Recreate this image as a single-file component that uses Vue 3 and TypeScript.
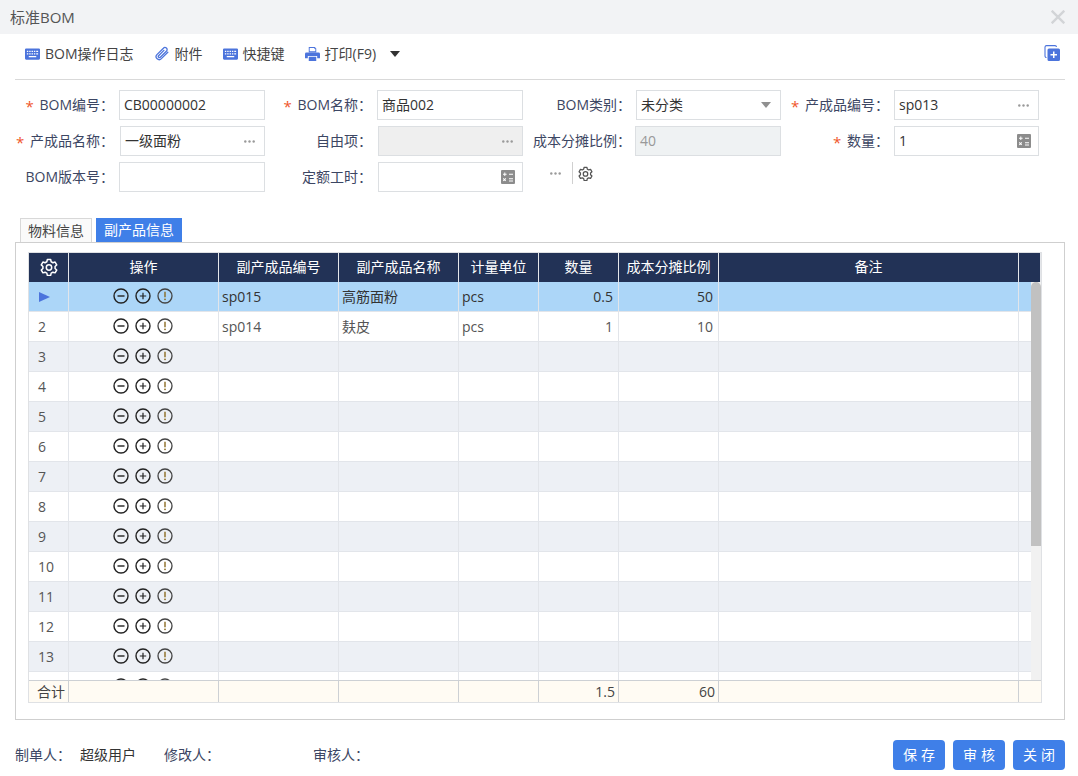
<script setup lang="ts">
interface Row {
  no: number
  code: string
  name: string
  unit: string
  qty: string
  ratio: string
}

const filled: Record<number, Partial<Row>> = {
  1: { code: 'sp015', name: '高筋面粉', unit: 'pcs', qty: '0.5', ratio: '50' },
  2: { code: 'sp014', name: '麸皮', unit: 'pcs', qty: '1', ratio: '10' }
}

const rows: Row[] = Array.from({ length: 14 }, (_, i) => ({
  no: i + 1,
  code: '',
  name: '',
  unit: '',
  qty: '',
  ratio: '',
  ...filled[i + 1]
}))

const heads = ['操作', '副产成品编号', '副产成品名称', '计量单位', '数量', '成本分摊比例', '备注', '']
</script>

<template>
  <div class="dialog">
    <svg class="defs" width="0" height="0" aria-hidden="true">
      <symbol id="i-keyboard" viewBox="0 0 16 12">
        <path fill-rule="evenodd" d="M1.2 0h13.6A1.2 1.2 0 0 1 16 1.2v9.6a1.2 1.2 0 0 1-1.2 1.2H1.2A1.2 1.2 0 0 1 0 10.800V1.200A1.200 1.200 0 0 1 1.200 0zM2 2.500v1.300h1.500V2.500zm2.500 0v1.300H6V2.500zm2.500 0v1.300h1.500V2.500zm2.500 0v1.300H11V2.500zm2.500 0v1.300h2V2.500zM2 5.200v1.300h1.500V5.200zm2.500 0v1.300H6V5.200zm2.500 0v1.300h1.500V5.200zm2.500 0v1.300H11V5.200zm2.500 0v1.300h2V5.200zM4 8v1.500h8V8z" />
      </symbol>
      <symbol id="i-clip" viewBox="0 0 16 16">
        <path fill="none" stroke="currentColor" stroke-width="1.300" stroke-linecap="round" stroke-linejoin="round" d="M13.800 6.200 7.400 12.600a3 3 0 0 1-4.500-4l6.500-6.400a2.100 2.100 0 0 1 3.200 2.800L6.300 11.200a1.100 1.100 0 0 1-1.700-1.500l5.300-5.300" />
      </symbol>
      <symbol id="i-printer" viewBox="0 0 16 16">
        <path d="M4 .5h6.500L12 2v4H4zM5 1.500v3.500h6V2.500h-1.200v-1zM1.500 6.500h13A1.500 1.500 0 0 1 16 8v4.500h-3V10H3v2.500H0V8a1.500 1.500 0 0 1 1.500-1.500zM4 11h8v4.500H4z" />
      </symbol>
      <symbol id="i-copy-add" viewBox="0 0 16 16">
        <path fill="none" stroke="currentColor" stroke-width="1.100" d="M2.500 12.500A1.500 1.500 0 0 1 1 11V2A1.500 1.500 0 0 1 2.500.6H11A1.500 1.500 0 0 1 12.500 2" />
        <path fill-rule="evenodd" d="M5 3.500h9.500A1.500 1.500 0 0 1 16 5v9.500a1.500 1.500 0 0 1-1.500 1.500H5a1.500 1.500 0 0 1-1.500-1.500V5A1.500 1.500 0 0 1 5 3.500zm4 3v2.500H6.500v1.500H9V13h1.500v-2.500H13V9h-2.500V6.500z" />
      </symbol>
      <symbol id="i-calc" viewBox="0 0 14 14">
        <path fill-rule="evenodd" d="M1 0h12a1 1 0 0 1 1 1v12a1 1 0 0 1-1 1H1a1 1 0 0 1-1-1V1a1 1 0 0 1 1-1zm2.300 2.500v1.200H2v1h1.300V6h1V4.700h1.300v-1H4.300V2.500zM8 3.700v1h4v-1zM2.600 8.100l-.7.700.9.900-.9.900.7.700.9-.9.900.9.700-.7-.9-.9.900-.9-.7-.7-.9.900zM8 8.200v1h4v-1zm0 2.200v1h4v-1z" />
      </symbol>
      <symbol id="i-dots" viewBox="0 0 11 3">
        <circle cx="1.300" cy="1.500" r="1.200" />
        <circle cx="5.500" cy="1.500" r="1.200" />
        <circle cx="9.700" cy="1.500" r="1.200" />
      </symbol>
      <symbol id="i-gear" viewBox="0 0 24 24">
        <path fill="none" stroke="currentColor" stroke-linejoin="round" stroke-width="2" d="M9.800 2h4.400l.7 3 2.300 1.300 2.900-.9 2.200 3.800-2.200 2.100v2.600l2.200 2.100-2.200 3.800-2.900-.9-2.300 1.300-.7 3H9.800l-.7-3-2.300-1.300-2.900.9L1.700 16l2.200-2.100v-2.600L1.700 9.200l2.200-3.800 2.900.9L9.100 5z" />
        <circle cx="12" cy="12.600" r="3.600" fill="none" stroke="currentColor" stroke-width="2" />
      </symbol>
      <symbol id="i-minus" viewBox="0 0 16 16">
        <circle cx="8" cy="8" r="7" fill="none" stroke="currentColor" stroke-width="1.400" />
        <path d="M4.500 8h7" stroke="currentColor" stroke-width="1.400" />
      </symbol>
      <symbol id="i-plus" viewBox="0 0 16 16">
        <circle cx="8" cy="8" r="7" fill="none" stroke="currentColor" stroke-width="1.400" />
        <path d="M4.800 8h6.400M8 4.800v6.400" stroke="currentColor" stroke-width="1.200" />
      </symbol>
      <symbol id="i-warn" viewBox="0 0 16 16">
        <circle cx="8" cy="8" r="7" fill="none" stroke="currentColor" stroke-width="1.300" />
        <path d="M8 3.800v5.400" stroke="#8a6a20" stroke-width="1.400" />
        <circle cx="8" cy="11.300" r=".9" fill="#8a6a20" />
      </symbol>
    </svg>

    <header class="title-bar">
      <span class="title">标准BOM</span>
      <svg class="close" viewBox="0 0 14 14" width="14" height="14">
        <path d="M.7.7l12.600 12.600M13.300.7.700 13.300" stroke="#d2d4d7" stroke-width="2.400" fill="none" />
      </svg>
    </header>

    <div class="toolbar">
      <a class="tool"><svg class="ico-kb"><use href="#i-keyboard" /></svg>BOM操作日志</a>
      <a class="tool"><svg class="ico-clip"><use href="#i-clip" /></svg>附件</a>
      <a class="tool"><svg class="ico-kb"><use href="#i-keyboard" /></svg>快捷键</a>
      <a class="tool"><svg class="ico-print"><use href="#i-printer" /></svg>打印(F9)</a>
      <span class="caret"></span>
      <svg class="ico-copy"><use href="#i-copy-add" /></svg>
    </div>

    <section class="form">
      <label class="req">BOM编号：</label>
      <div class="field">CB00000002</div>
      <label class="req">BOM名称：</label>
      <div class="field">商品002</div>
      <label>BOM类别：</label>
      <div class="field">未分类<span class="select-arrow"></span></div>
      <label class="req">产成品编号：</label>
      <div class="field">sp013<svg class="ico-dots"><use href="#i-dots" /></svg></div>

      <label class="req">产成品名称：</label>
      <div class="field inset">一级面粉<svg class="ico-dots"><use href="#i-dots" /></svg></div>
      <label>自由项：</label>
      <div class="field disabled inset"><svg class="ico-dots"><use href="#i-dots" /></svg></div>
      <label>成本分摊比例：</label>
      <div class="field disabled alt outset">40</div>
      <label class="req">数量：</label>
      <div class="field">1<svg class="ico-calc"><use href="#i-calc" /></svg></div>

      <label>BOM版本号：</label>
      <div class="field"></div>
      <label>定额工时：</label>
      <div class="field inset"><svg class="ico-calc"><use href="#i-calc" /></svg></div>
      <div class="form-extra">
        <svg class="ico-dots static"><use href="#i-dots" /></svg>
        <span class="divider"></span>
        <svg class="ico-gear-small"><use href="#i-gear" /></svg>
      </div>
    </section>

    <nav class="tabs">
      <span class="tab">物料信息</span>
      <span class="tab active">副产品信息</span>
    </nav>

    <section class="panel">
      <div class="grid">
        <div class="row head">
          <div class="cell center"><svg class="ico-gear-head"><use href="#i-gear" /></svg></div>
          <div v-for="(h, i) in heads" :key="i" class="cell center">{{ h }}</div>
        </div>

        <div class="body">
          <div
            v-for="row in rows"
            :key="row.no"
            class="row"
            :class="{ current: row.no === 1, stripe: row.no > 1 && row.no % 2 === 1 }"
          >
            <div class="cell no">
              <span v-if="row.no === 1" class="pointer"></span>
              <template v-else-if="row.no < 14">{{ row.no }}</template>
            </div>
            <div class="cell ops">
              <svg><use href="#i-minus" /></svg>
              <svg><use href="#i-plus" /></svg>
              <svg class="warn"><use href="#i-warn" /></svg>
            </div>
            <div class="cell">{{ row.code }}</div>
            <div class="cell">{{ row.name }}</div>
            <div class="cell">{{ row.unit }}</div>
            <div class="cell right">{{ row.qty }}</div>
            <div class="cell right">{{ row.ratio }}</div>
            <div class="cell"></div>
            <div class="cell blank"></div>
          </div>
          <div class="scrollbar"><div class="thumb"></div></div>
        </div>

        <div class="row foot">
          <div class="cell no">合计</div>
          <div class="cell"></div>
          <div class="cell"></div>
          <div class="cell"></div>
          <div class="cell"></div>
          <div class="cell right tight">1.5</div>
          <div class="cell right tight">60</div>
          <div class="cell"></div>
          <div class="cell"></div>
        </div>
      </div>
    </section>

    <footer class="footer">
      <span class="who w1">制单人：</span>
      <span class="who-val">超级用户</span>
      <span class="who w2">修改人：</span>
      <span class="who">审核人：</span>
      <div class="actions">
        <button>保存</button>
        <button>审核</button>
        <button>关闭</button>
      </div>
    </footer>
  </div>
</template>

<style>
html,
body {
  margin: 0;
  background: #fff;
}
</style>

<style scoped>
.dialog {
  width: 1078px;
  height: 776px;
  overflow: hidden;
  display: flex;
  flex-direction: column;
  background: #fff;
  color: #333;
  font: 14px/20px 'Open Sans', 'Noto Sans CJK SC', sans-serif;
}

.defs {
  position: absolute;
}

.title-bar {
  height: 34px;
  flex: none;
  display: flex;
  align-items: center;
  justify-content: space-between;
  padding: 0 13px 0 10px;
  background: #f2f3f5;
  color: #555;
  font-size: 15px;
}

.toolbar {
  height: 46px;
  flex: none;
  box-sizing: border-box;
  margin: 0 13px 0 15px;
  padding: 0 0 6px 10px;
  display: flex;
  align-items: center;
  border-bottom: 1px solid #d9d9d9;
  color: #444;
}

.tool {
  display: flex;
  align-items: center;
  margin-right: 20px;
}

.tool svg {
  color: #4c74dc;
  fill: #4c74dc;
  margin-right: 5px;
}

.ico-kb {
  width: 15px;
  height: 12px;
}

.ico-clip {
  width: 16px;
  height: 16px;
}

.ico-print {
  width: 15px;
  height: 16px;
}

.caret {
  margin-left: -6px;
  border: 5px solid transparent;
  border-top: 6px solid #333;
  border-bottom: 0;
  width: 0;
  height: 0;
}

.ico-copy {
  width: 16px;
  height: 16px;
  margin-left: auto;
  margin-right: 5px;
  color: #4c74dc;
  fill: #4c74dc;
  transform: translateY(-1px);
}

.form {
  flex: none;
  margin: 10px 0 0 15px;
  display: grid;
  grid-template-columns: 104px 146px 112px 146px 113px 145px 113px 145px;
  grid-auto-rows: 30px;
  row-gap: 6px;
}

.form label {
  align-self: center;
  justify-self: end;
  margin-right: 5px;
  color: #3c4663;
  white-space: nowrap;
  position: relative;
}

.form label.req::before {
  content: '*';
  position: absolute;
  left: -14px;
  top: 1px;
  color: #f0562b;
  font-size: 15px;
}

.field {
  display: flex;
  align-items: center;
  box-sizing: border-box;
  height: 30px;
  padding: 0 4px;
  border: 1px solid #dcdfe2;
  background: #fff;
  color: #333;
  font-size: 14px;
}

.field.inset {
  margin-left: 1px;
}

.field.outset {
  margin-left: -1px;
}

.field.disabled {
  background: #efefef;
}

.field.alt {
  background: #eff2f3;
  color: #999;
}

.ico-dots {
  flex: none;
  margin-left: auto;
  margin-right: 5px;
  width: 11px;
  height: 3px;
  fill: #9a9a9a;
}

.ico-dots.static {
  margin: 0;
}

.select-arrow {
  margin-left: auto;
  margin-right: 5px;
  border: 5px solid transparent;
  border-top: 6px solid #909090;
  border-bottom: 0;
}

.ico-calc {
  flex: none;
  margin-left: auto;
  margin-right: 3px;
  width: 14px;
  height: 14px;
  fill: #8c8c8c;
}

.form-extra {
  grid-column: span 2;
  display: flex;
  align-items: center;
  height: 22px;
  padding-left: 27px;
}

.divider {
  width: 1px;
  height: 22px;
  margin: 0 5px 0 11px;
  background: #d0d0d0;
}

.ico-gear-small {
  width: 15px;
  height: 15px;
  color: #555;
}

.tabs {
  flex: none;
  display: flex;
  gap: 4px;
  height: 24px;
  margin: 26px 0 0 20px;
}

.tab {
  box-sizing: border-box;
  height: 24px;
  padding: 0 7px;
  line-height: 24px;
  border: 1px solid #d8d8d8;
  border-bottom: 0;
  background: #fafafa;
  color: #444;
}

.tab.active {
  padding: 0 8px;
  border: 0;
  background: #3f7fe8;
  color: #fff;
}

.panel {
  flex: none;
  box-sizing: border-box;
  height: 478px;
  margin: 0 13px 0 15px;
  padding: 9px 12px 0;
  border: 1px solid #cfcfcf;
}

.grid {
  width: 1014px;
  box-sizing: border-box;
  border: 1px solid #dfe1e4;
}

.row {
  display: grid;
  grid-template-columns: 40px 150px 120px 120px 80px 80px 100px 300px 1fr;
  height: 30px;
  box-sizing: border-box;
  border-bottom: 1px solid #e2e5ea;
  background: #fff;
}

.row.stripe {
  background: #edf0f5;
}

.row.current {
  background: #acd6f8;
}

.cell {
  display: flex;
  align-items: center;
  padding: 0 5px 0 3px;
  min-width: 0;
  border-right: 1px solid #e2e5ea;
  color: #555;
  white-space: nowrap;
}

.row.current .cell {
  color: #333;
}

.cell:last-child {
  border-right: 0;
}

.cell.center {
  justify-content: center;
}

.cell.right {
  justify-content: flex-end;
}

.cell.no {
  padding-left: 9px;
}

.head {
  height: 29px;
  background: #223256;
  border-bottom: 0;
}

.head .cell {
  padding: 0 4px 1px;
  color: #fff;
  border-right: 1px solid #e4e6ea;
}

.ico-gear-head {
  width: 18px;
  height: 18px;
  color: #fff;
}

.body {
  position: relative;
  height: 398px;
  overflow: hidden;
}

.pointer {
  margin-left: 1px;
  border-left: 11px solid #4c74dc;
  border-top: 5px solid transparent;
  border-bottom: 5px solid transparent;
}

.ops {
  justify-content: center;
  gap: 6px;
}

.ops svg {
  width: 16px;
  height: 16px;
  color: #222;
  transform: translateY(-1px);
}

.ops svg.warn {
  color: #444;
}

.scrollbar {
  position: absolute;
  top: 0;
  right: 0;
  width: 10px;
  height: 100%;
  background: #f1f1f1;
}

.thumb {
  height: 264px;
  border-radius: 5px 5px 0 0;
  background: #c1c1c1;
}

.foot {
  height: 22px;
  border-top: 1px solid #cdd0d4;
  border-bottom: 0;
  background: #fffbf3;
}

.foot .cell {
  border-right-color: #cdd0d4;
  color: #444;
}

.foot .cell.tight {
  padding-right: 3px;
}

.foot .cell.no {
  padding-left: 8px;
  padding-right: 0;
}

.footer {
  flex: 1;
  display: flex;
  align-items: center;
  margin: 0 13px 0 15px;
  padding-top: 14px;
  box-sizing: border-box;
}

.who {
  color: #3c4663;
}

.who.w1 {
  width: 65px;
}

.who.w2 {
  width: 149px;
}

.who-val {
  width: 84px;
  color: #333;
}

.actions {
  margin-left: auto;
  display: flex;
  gap: 8px;
}

.actions button {
  width: 52px;
  height: 30px;
  padding: 0;
  border: 0;
  border-radius: 4px;
  background: #3f7fe8;
  color: #fff;
  font: 14px/30px 'Open Sans', 'Noto Sans CJK SC', sans-serif;
  letter-spacing: 4px;
  text-indent: 4px;
}
</style>
